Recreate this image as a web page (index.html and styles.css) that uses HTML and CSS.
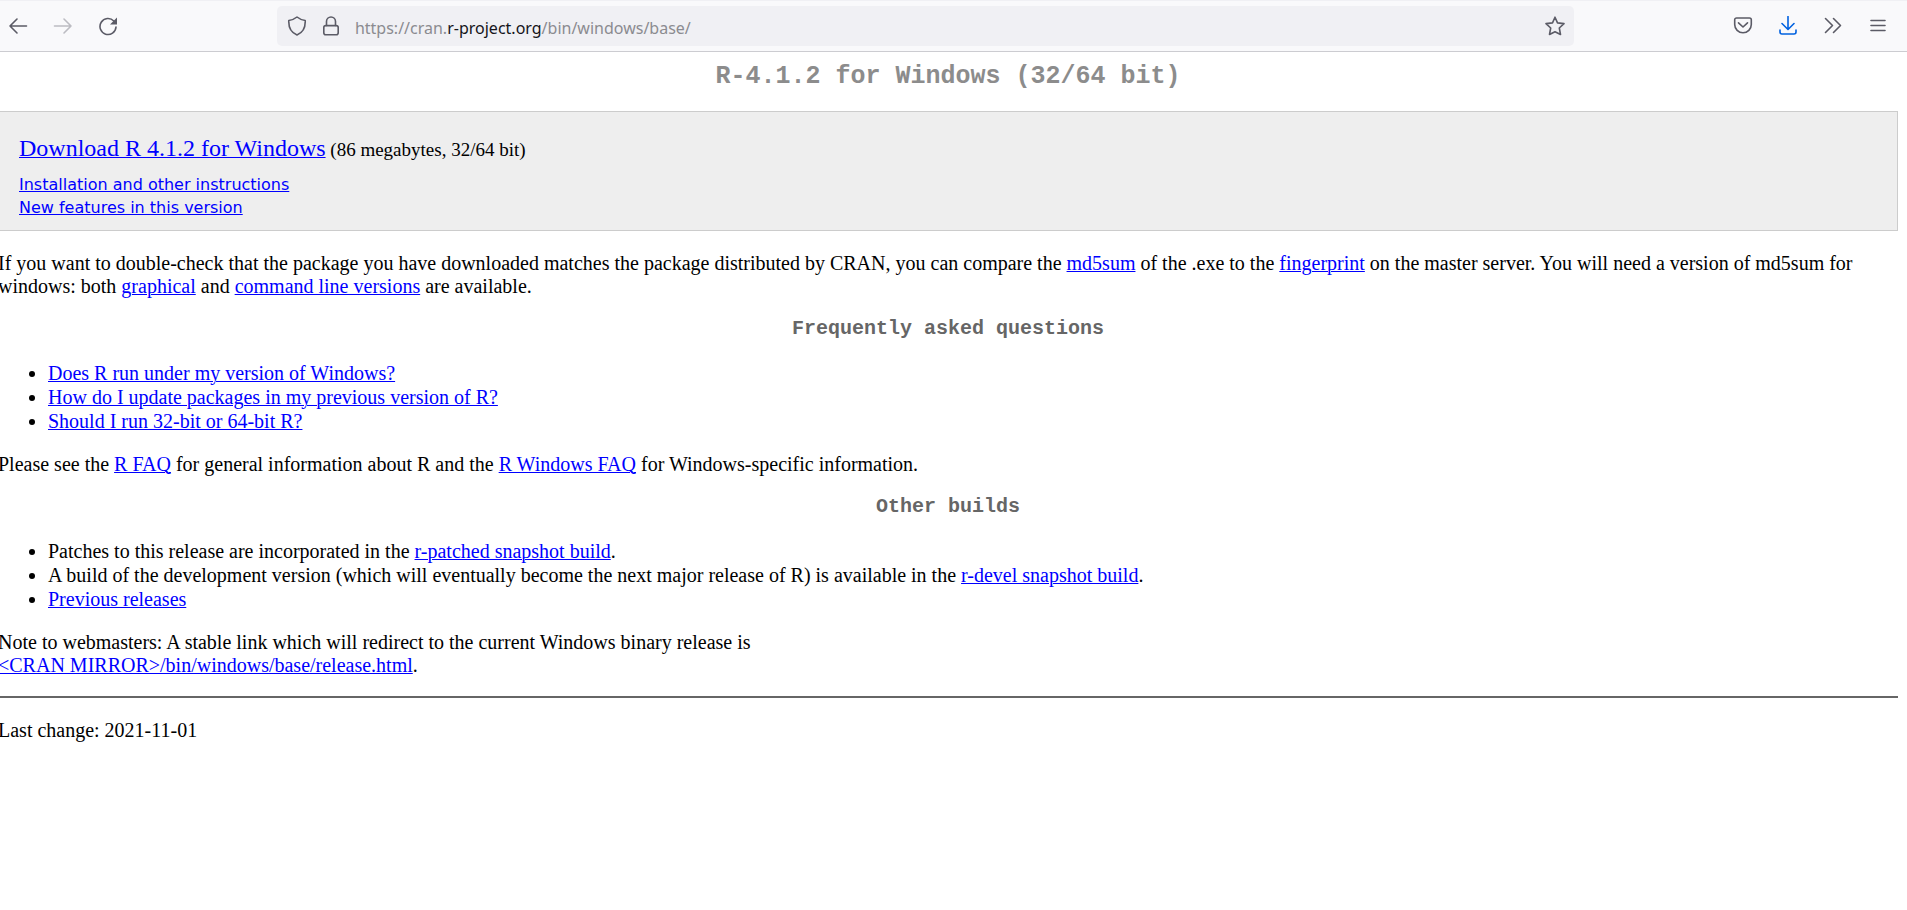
FILE: index.html
```html
<!DOCTYPE html>
<html lang="en">
<head>
<meta charset="utf-8">
<title>Download R-4.1.2 for Windows</title>
<link rel="stylesheet" href="styles.css">
</head>
<body>
<header class="toolbar">
  <nav class="tools" aria-label="Navigation">
    <button class="tool" type="button" aria-label="Back"><svg viewBox="0 0 20 20"><path d="M18.500 10H2M9 3L2 10l7 7"/></svg></button>
    <button class="tool" type="button" aria-label="Forward" disabled><svg viewBox="0 0 20 20"><path d="M1.500 10H18M11 3l7 7-7 7"/></svg></button>
    <button class="tool" type="button" aria-label="Reload"><svg viewBox="0 0 20 20"><path d="M15.800 5A8 8 0 1 0 18 11"/><path class="solid" d="M19 1.500V8.500h-7z"/></svg></button>
  </nav>
  <div class="address">
    <button class="tool" type="button" aria-label="Tracking protection"><svg viewBox="0 0 20 20"><path d="M10 1C7.500 3 4.500 4.200 1.800 4.500 1.500 10.500 4 16.500 10 19c6-2.500 8.500-8.500 8.200-14.500C15.500 4.200 12.500 3 10 1z"/></svg></button>
    <button class="tool" type="button" aria-label="Site security"><svg viewBox="0 0 20 20"><rect x="2.800" y="9.600" width="14.400" height="9.200" rx="2"/><path d="M5.500 9.500V5.500a4.500 4.500 0 0 1 9 0v4"/></svg></button>
    <div class="url" role="textbox" aria-label="Address" contenteditable="true" spellcheck="false">https://cran.<span class="domain">r-project.org</span>/bin/windows/base/</div>
    <button class="tool" type="button" aria-label="Bookmark this page"><svg viewBox="0 0 20 20"><path d="M10 1.200l2.500 5.700 6.500.7-4.700 4.400 1.200 6.500L10 15.700l-5.500 2.800L5.700 12 1 7.600l6.500-.7z"/></svg></button>
  </div>
  <div class="tools">
    <button class="tool" type="button" aria-label="Save to Pocket"><svg viewBox="0 0 20 20"><path d="M3.500 2h13A1.800 1.800 0 0 1 18.300 3.800V8.500a8.300 8.300 0 0 1-16.600 0V3.800A1.800 1.800 0 0 1 3.500 2z"/><path d="M5.500 6.800L10 11l4.500-4.200"/></svg></button>
    <button class="tool download" type="button" aria-label="Downloads"><svg viewBox="0 0 20 20"><path d="M10 .5V13M4 7.500l6 6 6-6"/><path d="M2 14v2a2 2 0 0 0 2 2h12a2 2 0 0 0 2-2v-2"/></svg></button>
    <button class="tool" type="button" aria-label="More tools"><svg viewBox="0 0 20 20"><path d="M2.500 2.500L9.500 9.500l-7 7M10.500 2.500l7 7-7 7"/></svg></button>
    <button class="tool" type="button" aria-label="Open application menu"><svg viewBox="0 0 20 20"><path d="M3 4.500h14M3 9.500h14M3 14.500h14"/></svg></button>
  </div>
</header>
<main class="page">
  <h1 class="title">R-4.1.2 for Windows (32/64 bit)</h1>
  <section class="box">
    <p class="lead"><a class="main-link" href="#download">Download R 4.1.2 for Windows</a> (86 megabytes, 32/64 bit)</p>
    <p class="extra"><a href="#readme">Installation and other instructions</a><br><a href="#news">New features in this version</a></p>
  </section>
  <p>If you want to double-check that the package you have downloaded matches the package distributed by CRAN, you can compare the <a href="#md5sum">md5sum</a> of the .exe to the <a href="#fingerprint">fingerprint</a> on the master server. You will need a version of md5sum for windows: both <a href="#graphical">graphical</a> and <a href="#cli">command line versions</a> are available.</p>
  <h3>Frequently asked questions</h3>
  <ul>
    <li><a href="#version">Does R run under my version of Windows?</a></li>
    <li><a href="#update">How do I update packages in my previous version of R?</a></li>
    <li><a href="#bits">Should I run 32-bit or 64-bit R?</a></li>
  </ul>
  <p>Please see the <a href="#faq">R FAQ</a> for general information about R and the <a href="#winfaq">R Windows FAQ</a> for Windows-specific information.</p>
  <h3>Other builds</h3>
  <ul>
    <li>Patches to this release are incorporated in the <a href="#patched">r-patched snapshot build</a>.</li>
    <li>A build of the development version (which will eventually become the next major release of R) is available in the <a href="#devel">r-devel snapshot build</a>.</li>
    <li><a href="#old">Previous releases</a></li>
  </ul>
  <p>Note to webmasters: A stable link which will redirect to the current Windows binary release is<br><a href="#release">&lt;CRAN MIRROR&gt;/bin/windows/base/release.html</a>.</p>
  <hr>
  <p>Last change: 2021-11-01</p>
</main>
</body>
</html>
```
FILE: styles.css
```css
body {
  margin: 0;
  background: #fff;
  color: #000;
  font: 20px/23px "Liberation Serif", "Times New Roman", serif;
  overflow-x: hidden;
}

/* Browser toolbar */
.toolbar {
  display: flex;
  justify-content: space-between;
  align-items: center;
  box-sizing: border-box;
  height: 52px;
  padding: 0 19px 0 8px;
  border-top: 1px solid #f0f0f4;
  border-bottom: 1px solid #ccccd1;
  background: #f9f9fb;
}
.tools {
  display: flex;
  gap: 25px;
}
.tool {
  display: block;
  flex: none;
  width: 20px;
  height: 20px;
  padding: 0;
  border: 0;
  background: none;
  color: #5b5b66;
}
.tool:disabled {
  color: #bcbcc2;
}
.tool svg {
  display: block;
  width: 20px;
  height: 20px;
  fill: none;
  stroke: currentColor;
  stroke-width: 1.6;
  stroke-linecap: round;
  stroke-linejoin: round;
}
.tool .solid {
  fill: currentColor;
  stroke: none;
}
.tool.download {
  color: #0061e0;
}
.address {
  display: flex;
  align-items: center;
  gap: 14px;
  box-sizing: border-box;
  width: 69%;
  height: 40px;
  padding: 0 9px 0 10px;
  border-radius: 5px;
  background: #f0f0f4;
}
.url {
  flex: 1;
  padding-top: 3px;
  overflow: hidden;
  white-space: nowrap;
  color: #8b8b90;
  font: 16px/24px "Noto Sans", "Open Sans", sans-serif;
}
.domain {
  color: #15141a;
}

/* Page */
.page {
  margin: 0 9px 0 -2px;
  padding-top: 10px;
}
a {
  color: #00f;
  text-decoration-thickness: 1px;
}
p {
  margin: 19px 0;
}
h1,
h3 {
  font-family: "Liberation Mono", "Courier New", monospace;
  font-weight: bold;
  text-align: center;
}
h1 {
  margin: 0 0 20px;
  color: #8c8c8c;
  font-size: 25px;
  line-height: 29px;
}
h3 {
  margin: 18px 0 21px;
  color: #666;
  font-size: 20px;
  line-height: 23px;
}
ul {
  margin: 20px 0;
  padding-left: 50px;
  line-height: 24px;
}
.box {
  margin-bottom: 21px;
  padding: 21px 20px 11px;
  border: 1px solid #ccc;
  background: #eee;
}
.box p {
  margin: 0;
}
.lead {
  font-size: 19px;
  line-height: 30px;
}
.main-link {
  font-size: 24px;
}
.box .extra {
  margin-top: 8px;
  font-family: "DejaVu Sans", Verdana, sans-serif;
  font-size: 16px;
}
hr {
  height: 2px;
  margin: 19px 0 21px;
  border: 0;
  background: #666;
}
```
